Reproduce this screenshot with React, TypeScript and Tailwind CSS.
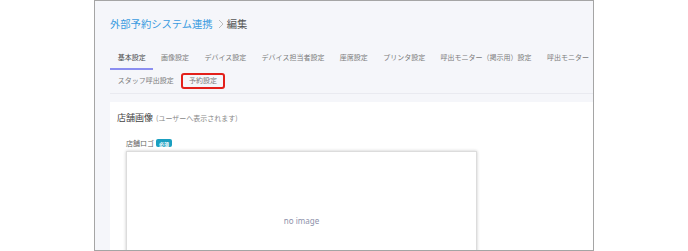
import type { ReactNode } from "react";

const tabs = [
  "基本設定",
  "画像設定",
  "デバイス設定",
  "デバイス担当者設定",
  "座席設定",
  "プリンタ設定",
  "呼出モニター（掲示用）設定",
  "呼出モニター（受付用）設定",
  "スタッフ呼出設定",
  "予約設定",
];

function Tab({ label, active, marked }: { label: string; active?: boolean; marked?: boolean }) {
  return (
    <div
      className={
        active
          ? "relative flex h-[23px] items-center whitespace-nowrap border-b-2 border-[#8b8ef0] px-[7.7px] text-[7px] text-[#4a4a4a]"
          : "relative flex h-[23px] items-center whitespace-nowrap border-b-2 border-transparent px-[7.7px] text-[7px] text-[#7c7c7c]"
      }
    >
      {label}
      {marked && (
        <span className="pointer-events-none absolute inset-x-0 top-[3px] bottom-[2px] rounded-[3px] border-2 border-[#e3201b]" />
      )}
    </div>
  );
}

function Card({ children }: { children: ReactNode }) {
  return <div className="mt-[8px] w-[520px] bg-white px-[7px] pt-[9px] pb-4">{children}</div>;
}

export default function App() {
  return (
    <div className="h-[251px] w-[688px] overflow-hidden bg-white font-['Noto_Sans_CJK_JP','Noto_Sans',sans-serif]">
      <div className="ml-[94px] h-[251px] w-[500px] overflow-hidden border border-[#a5a5a5] bg-[#f5f6fa]">
        <div className="w-[620px] pl-[15px]">
          {/* breadcrumb */}
          <div className="mt-[16px] flex h-[14px] items-center text-[10.3px] leading-[14px]">
            <span className="text-[#3a9be0]">外部予約システム連携</span>
            <svg width="9" height="10" viewBox="0 0 9 10" className="ml-[3px] mr-[2px]">
              <path d="M3 1 L7 5 L3 9" fill="none" stroke="#b5b5b5" strokeWidth="0.9" />
            </svg>
            <span className="text-[#555]">編集</span>
          </div>

          {/* tabs */}
          <div className="mt-[16px] flex w-[600px] flex-wrap border-b border-[#e9eaf0]">
            {tabs.map((t, i) => (
              <Tab key={t} label={t} active={i === 0} marked={t === "予約設定"} />
            ))}
          </div>

          <Card>
            <div className="flex h-[14px] items-baseline leading-[14px]">
              <span className="text-[9px] text-[#444]">店舗画像</span>
              <span className="ml-[3px] text-[7px] text-[#888]">(ユーザーへ表示されます)</span>
            </div>
            <div className="pl-[9px]">
              <div className="mt-[13px] flex h-[10px] items-center text-[7px] leading-[10px] text-[#666]">
                店舗ロゴ
                <span className="ml-[2px] flex h-[8px] w-[16px] items-center justify-center rounded-[2px] bg-[#1a9fc0] text-[5px] font-bold leading-none text-white">
                  必須
                </span>
              </div>
              <div className="mt-[3px] flex h-[140px] w-[351px] items-center justify-center border border-[#dcdcdc] bg-white shadow-[0_0_3px_rgba(0,0,0,0.22)]">
                <span className="font-['Noto_Sans',sans-serif] text-[8px] text-[#8d91aa]">no image</span>
              </div>
            </div>
          </Card>
        </div>
      </div>
    </div>
  );
}
